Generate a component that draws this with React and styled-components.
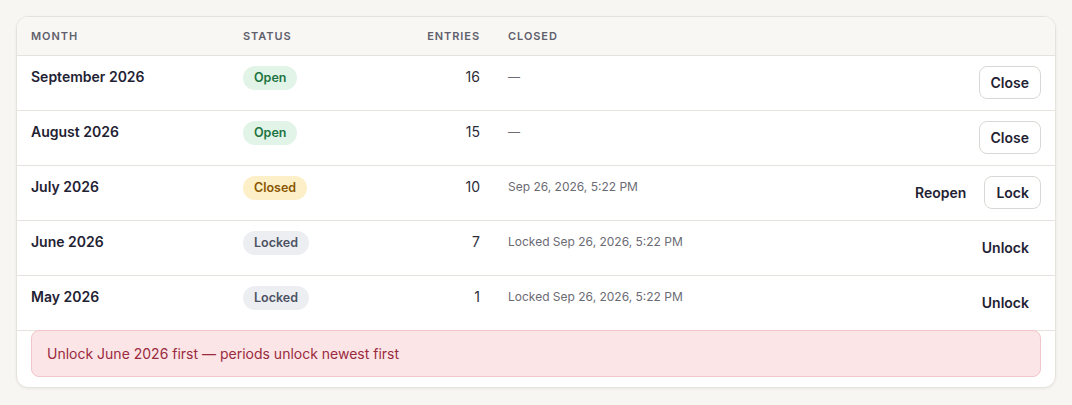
import React from 'react';
import styled, { createGlobalStyle } from 'styled-components';

const GlobalStyle = createGlobalStyle`
  * { box-sizing: border-box; }
  body {
    margin: 0;
    background: #f7f6f2;
    font-family: Inter, "Noto Sans", sans-serif;
    color: #1f2233;
  }
`;

const Page = styled.div`
  padding: 16px;
`;

const Card = styled.div`
  background: #fff;
  border: 1px solid #e6e3de;
  border-radius: 12px;
  box-shadow: 0 1px 3px rgba(30, 30, 20, 0.06);
  overflow: hidden;
`;

const COLS = '212px 140px 125px 1fr auto';

const HeadRow = styled.div`
  display: grid;
  grid-template-columns: ${COLS};
  height: 39px;
  align-items: center;
  background: #f8f7f4;
  border-bottom: 1px solid #e6e3de;
`;

const HeadCell = styled.div`
  padding: 0 14px;
  font-size: 11px;
  font-weight: 600;
  letter-spacing: 0.085em;
  text-transform: uppercase;
  color: #5f606c;
  text-align: ${({ $right }) => ($right ? 'right' : 'left')};
`;

const Row = styled.div`
  display: grid;
  grid-template-columns: ${COLS};
  align-items: start;
  padding: 11px 0;
  height: 55px;
  border-bottom: 1px solid #e6e3de;
`;

const Cell = styled.div`
  padding: 0 14px;
  font-size: 14px;
  line-height: 20px;
  display: flex;
  justify-content: ${({ $right }) => ($right ? 'flex-end' : 'flex-start')};
`;

const Month = styled(Cell)`
  font-weight: 600;
  color: #1f2233;
`;

const Count = styled(Cell)`
  color: #2b2d38;
`;

const Stamp = styled(Cell)`
  font-size: 12px;
  color: #6b6b73;
`;

const badgeTone = {
  open: { bg: '#e2f4e8', fg: '#1e7442' },
  closed: { bg: '#fdefc8', fg: '#8a5600' },
  locked: { bg: '#eceef2', fg: '#4d5263' },
};

const Badge = styled.span`
  display: inline-flex;
  align-items: center;
  height: 24px;
  margin-top: -1px;
  padding: 0 11px;
  border-radius: 999px;
  font-size: 12.5px;
  font-weight: 600;
  background: ${({ $tone }) => badgeTone[$tone].bg};
  color: ${({ $tone }) => badgeTone[$tone].fg};
`;

const Actions = styled.div`
  display: flex;
  justify-content: flex-end;
  gap: 6px;
  padding: 0 14px;
  margin-top: -1px;
  margin-bottom: -11px;
`;

const Button = styled.button`
  height: 33px;
  padding: 0 11px;
  border-radius: 8px;
  border: 1px solid ${({ $ghost }) => ($ghost ? 'transparent' : '#d9d8d4')};
  background: ${({ $ghost }) => ($ghost ? 'transparent' : '#fff')};
  font-family: inherit;
  font-size: 14px;
  font-weight: 600;
  color: #1f2233;
  cursor: pointer;
`;

const Alert = styled.div`
  margin: -1px 14px 10px;
  height: 47px;
  display: flex;
  align-items: center;
  padding: 0 15px;
  background: #fce5e6;
  border: 1px solid #f1c6c9;
  border-radius: 8px;
  font-size: 14px;
  color: #9a2a3e;
`;

const periods = [
  { month: 'September 2026', status: 'open', entries: 16, closed: null, actions: [{ label: 'Close' }] },
  { month: 'August 2026', status: 'open', entries: 15, closed: null, actions: [{ label: 'Close' }] },
  {
    month: 'July 2026',
    status: 'closed',
    entries: 10,
    closed: 'Sep 26, 2026, 5:22 PM',
    actions: [{ label: 'Reopen', ghost: true }, { label: 'Lock' }],
  },
  {
    month: 'June 2026',
    status: 'locked',
    entries: 7,
    closed: 'Locked Sep 26, 2026, 5:22 PM',
    actions: [{ label: 'Unlock', ghost: true }],
  },
  {
    month: 'May 2026',
    status: 'locked',
    entries: 1,
    closed: 'Locked Sep 26, 2026, 5:22 PM',
    actions: [{ label: 'Unlock', ghost: true }],
  },
];

const statusLabel = { open: 'Open', closed: 'Closed', locked: 'Locked' };

const App = () => (
  <>
    <GlobalStyle />
    <Page>
      <Card>
        <HeadRow>
          <HeadCell>Month</HeadCell>
          <HeadCell>Status</HeadCell>
          <HeadCell $right>Entries</HeadCell>
          <HeadCell>Closed</HeadCell>
          <HeadCell />
        </HeadRow>
        {periods.map((p) => (
          <Row key={p.month}>
            <Month>{p.month}</Month>
            <Cell>
              <Badge $tone={p.status}>{statusLabel[p.status]}</Badge>
            </Cell>
            <Count $right>{p.entries}</Count>
            <Stamp>{p.closed || '—'}</Stamp>
            <Actions>
              {p.actions.map((a) => (
                <Button key={a.label} $ghost={a.ghost}>
                  {a.label}
                </Button>
              ))}
            </Actions>
          </Row>
        ))}
        <Alert>Unlock June 2026 first — periods unlock newest first</Alert>
      </Card>
    </Page>
  </>
);

export default App;
